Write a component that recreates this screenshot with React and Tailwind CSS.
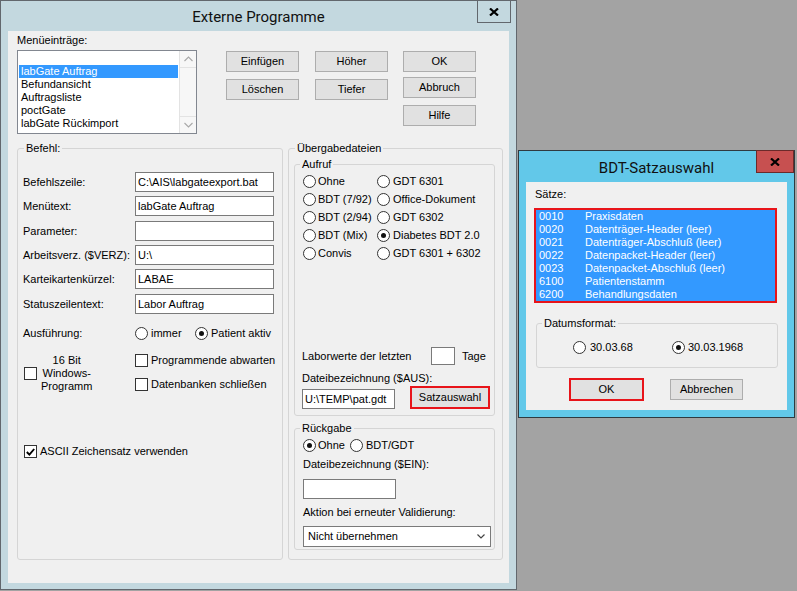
import React from 'react';

const Radio = ({ checked }) => (
  <span className="flex h-[13px] w-[13px] shrink-0 items-center justify-center rounded-full border border-[#333333] bg-white">
    {checked ? <span className="h-[5px] w-[5px] rounded-full bg-[#111111]" /> : null}
  </span>
);

const Check = ({ checked }) => (
  <span className="flex h-[13px] w-[13px] shrink-0 items-center justify-center border border-[#333333] bg-white">
    {checked ? (
      <svg width="9" height="8" viewBox="0 0 9 8">
        <path d="M0.8 4 L3.4 6.6 L8.2 1" fill="none" stroke="#000" strokeWidth="1.9" />
      </svg>
    ) : null}
  </span>
);

const Btn = ({ children, className }) => (
  <div className={`flex items-center justify-center border border-[#adadad] bg-[#e1e1e1] ${className}`}>{children}</div>
);

const CloseX = () => (
  <svg width="10" height="8" viewBox="0 0 10 8">
    <path d="M1 0.5 L9 7.5 M9 0.5 L1 7.5" stroke="#000" strokeWidth="2.2" />
  </svg>
);

const Input = ({ value, className }) => (
  <div className={`flex items-center border border-[#7a7a7a] bg-white pl-[2px] ${className}`}>{value}</div>
);

const Chevron = ({ up, color }) => (
  <svg width="9" height="6" viewBox="0 0 9 6">
    <path d={up ? 'M0.5 5 L4.5 1 L8.5 5' : 'M0.5 1 L4.5 5 L8.5 1'} fill="none" stroke={color} strokeWidth="1.1" />
  </svg>
);

const befehlRows = [
  ['Befehlszeile:', 'C:\\AIS\\labgateexport.bat', ''],
  ['Menütext:', 'labGate Auftrag', 'mt-[4px]'],
  ['Parameter:', '', 'mt-[5px]'],
  ['Arbeitsverz. ($VERZ):', 'U:\\', 'mt-[4px]'],
  ['Karteikartenkürzel:', 'LABAE', 'mt-[4px]'],
  ['Statuszeilentext:', 'Labor Auftrag', 'mt-[5px]'],
];

const aufrufRows = [
  ['Ohne', false, 'GDT 6301', false],
  ['BDT (7/92)', false, 'Office-Dokument', false],
  ['BDT (2/94)', false, 'GDT 6302', false],
  ['BDT (Mix)', false, 'Diabetes BDT 2.0', true],
  ['Convis', false, 'GDT 6301 + 6302', false],
];

const saetze = [
  ['0010', 'Praxisdaten'],
  ['0020', 'Datenträger-Header (leer)'],
  ['0021', 'Datenträger-Abschluß (leer)'],
  ['0022', 'Datenpacket-Header (leer)'],
  ['0023', 'Datenpacket-Abschluß (leer)'],
  ['6100', 'Patientenstamm'],
  ['6200', 'Behandlungsdaten'],
];

export default function App() {
  return (
    <div className="relative h-[591px] w-[797px] overflow-hidden bg-[#a3a3a3] font-['Liberation_Sans',Arial,sans-serif] text-[11px] leading-[13px] text-black">
      {/* Main window */}
      <div className="absolute left-0 top-0 flex h-[590px] w-[517px] flex-col border border-[#62676d] bg-[#c3d8df]">
        <div className="relative flex h-[30px] shrink-0 items-center justify-center">
          <span className="mt-[1px] font-['Roboto',sans-serif] text-[15px] leading-[18px] text-[#111]">Externe Programme</span>
          <div className="absolute right-[5px] top-[-1px] flex h-[23px] w-[34px] items-center justify-center border border-[#62676d]">
            <CloseX />
          </div>
        </div>
        <div className="mx-[7px] mb-[6px] flex-1 bg-[#f0f0f0]">
          {/* top section */}
          <div className="flex pl-[9px] pt-[3px]">
            <div className="w-[180px]">
              <div className="h-[13px]">Menüeinträge:</div>
              <div className="mt-[3px] flex h-[84px] w-[180px] border border-[#828790] bg-white">
                <div className="flex-1 p-[1px]">
                  <div className="h-[13px]" />
                  <div className="h-[13px] bg-[#3399ff] pl-[2px] text-white">labGate Auftrag</div>
                  <div className="h-[13px] pl-[2px]">Befundansicht</div>
                  <div className="h-[13px] pl-[2px]">Auftragsliste</div>
                  <div className="h-[13px] pl-[2px]">poctGate</div>
                  <div className="h-[13px] pl-[2px]">labGate Rückimport</div>
                </div>
                <div className="flex w-[17px] flex-col justify-between border-l border-[#e3e3e3] bg-[#f7f7f7]">
                  <div className="flex h-[17px] items-center justify-center border-b border-[#e3e3e3]">
                    <Chevron up color="#a8a8a8" />
                  </div>
                  <div className="flex h-[17px] items-center justify-center border-t border-[#e3e3e3]">
                    <Chevron color="#a8a8a8" />
                  </div>
                </div>
              </div>
            </div>
            <div className="ml-[29px] mt-[17px] flex">
              <div className="flex flex-col gap-[7px]">
                <Btn className="h-[21px] w-[73px]">Einfügen</Btn>
                <Btn className="h-[21px] w-[73px]">Löschen</Btn>
              </div>
              <div className="ml-[16px] flex flex-col gap-[7px]">
                <Btn className="h-[21px] w-[73px]">Höher</Btn>
                <Btn className="h-[21px] w-[73px]">Tiefer</Btn>
              </div>
              <div className="ml-[15px] flex flex-col">
                <Btn className="h-[21px] w-[73px]">OK</Btn>
                <Btn className="mt-[5px] h-[21px] w-[73px]">Abbruch</Btn>
                <Btn className="mt-[7px] h-[21px] w-[73px]">Hilfe</Btn>
              </div>
            </div>
          </div>

          {/* bottom section */}
          <div className="mt-[8px] flex pl-[9px]">
            <fieldset className="h-[418px] w-[266px] rounded-[3px] border border-[#d5d5d5]">
              <legend className="ml-[6px] px-[2px] leading-[13px]">Befehl:</legend>
              <div className="pl-[5px] pt-[17px]">
                {befehlRows.map(([label, value, mt]) => (
                  <div key={label} className={`flex h-[20px] items-center ${mt}`}>
                    <span className="w-[112px] shrink-0">{label}</span>
                    <Input value={value} className="h-[20px] w-[139px]" />
                  </div>
                ))}
                <div className="mt-[13px] flex h-[13px] items-center">
                  <span className="w-[112px] shrink-0">Ausführung:</span>
                  <div className="flex w-[60px] items-center gap-[3px]">
                    <Radio />
                    <span>immer</span>
                  </div>
                  <div className="flex items-center gap-[3px]">
                    <Radio checked />
                    <span>Patient aktiv</span>
                  </div>
                </div>
                <div className="mt-[14px] flex items-start">
                  <div className="flex w-[112px] shrink-0 items-center pl-[1px]">
                    <Check />
                    <span className="ml-[4px] text-center">
                      16 Bit
                      <br />
                      Windows-
                      <br />
                      Programm
                    </span>
                  </div>
                  <div className="flex flex-col gap-[11px]">
                    <div className="flex h-[13px] items-center gap-[3px]">
                      <Check />
                      <span>Programmende abwarten</span>
                    </div>
                    <div className="flex h-[13px] items-center gap-[3px]">
                      <Check />
                      <span>Datenbanken schließen</span>
                    </div>
                  </div>
                </div>
                <div className="mt-[52px] flex h-[13px] items-center gap-[3px] pl-[1px]">
                  <Check checked />
                  <span>ASCII Zeichensatz verwenden</span>
                </div>
              </div>
            </fieldset>

            <fieldset className="ml-[5px] h-[418px] w-[215px] rounded-[3px] border border-[#d5d5d5]">
              <legend className="ml-[6px] px-[2px] leading-[13px]">Übergabedateien</legend>
              <fieldset className="ml-[5px] mt-[3px] w-[201px] rounded-[3px] border border-[#d5d5d5] pb-[6px]">
                <legend className="ml-[5px] px-[2px] leading-[13px]">Aufruf</legend>
                <div className="pl-[8px] pt-[1px]">
                  {aufrufRows.map(([a, ac, b, bc]) => (
                    <div key={a} className="flex h-[18px] items-center">
                      <div className="flex w-[74px] items-center gap-[2px]">
                        <Radio checked={ac} />
                        <span>{a}</span>
                      </div>
                      <div className="flex items-center gap-[3px]">
                        <Radio checked={bc} />
                        <span>{b}</span>
                      </div>
                    </div>
                  ))}
                </div>
                <div className="mt-[85px] flex h-[18px] items-center pl-[7px]">
                  <span className="w-[129px] shrink-0">Laborwerte der letzten</span>
                  <div className="h-[18px] w-[24px] border border-[#7a7a7a] bg-white" />
                  <span className="ml-[7px]">Tage</span>
                </div>
                <div className="mt-[7px] h-[13px] pl-[7px]">Dateibezeichnung ($AUS):</div>
                <div className="mt-[1px] flex items-end pl-[7px]">
                  <Input value="U:\TEMP\pat.gdt" className="h-[20px] w-[93px]" />
                  <div className="ml-[15px] flex h-[23px] w-[80px] items-center justify-center border-2 border-[#e8141a] bg-[#e1e1e1]">
                    Satzauswahl
                  </div>
                </div>
              </fieldset>
              <fieldset className="ml-[5px] mt-[6px] w-[201px] rounded-[3px] border border-[#d5d5d5] pb-[2px]">
                <legend className="ml-[5px] px-[2px] leading-[13px]">Rückgabe</legend>
                <div className="flex h-[18px] items-center pl-[8px] pt-[2px]">
                  <div className="flex w-[47px] items-center gap-[2px]">
                    <Radio checked />
                    <span>Ohne</span>
                  </div>
                  <div className="flex items-center gap-[3px]">
                    <Radio />
                    <span>BDT/GDT</span>
                  </div>
                </div>
                <div className="mt-[5px] h-[13px] pl-[8px]">Dateibezeichnung ($EIN):</div>
                <div className="mt-[8px] pl-[8px]">
                  <Input value="" className="h-[20px] w-[93px]" />
                </div>
                <div className="mt-[7px] h-[13px] pl-[8px]">Aktion bei erneuter Validierung:</div>
                <div className="mt-[7px] pl-[8px]">
                  <div className="flex h-[21px] w-[188px] items-center justify-between border border-[#7a7a7a] bg-white pl-[4px] pr-[5px]">
                    <span>Nicht übernehmen</span>
                    <svg width="8" height="5" viewBox="0 0 8 5">
                      <path d="M0.5 0.5 L4 4 L7.5 0.5" fill="none" stroke="#444" strokeWidth="1.2" />
                    </svg>
                  </div>
                </div>
              </fieldset>
            </fieldset>
          </div>
        </div>
      </div>

      {/* BDT window */}
      <div className="absolute left-[518px] top-[150px] flex h-[268px] w-[277px] flex-col border border-[#2f3a40] bg-[#62c8e9]">
        <div className="relative flex h-[31px] shrink-0 items-center justify-center">
          <span className="mt-[2px] font-['Roboto',sans-serif] text-[15px] leading-[18px] text-[#111]">BDT-Satzauswahl</span>
          <div className="absolute right-0 top-[-1px] flex h-[23px] w-[38px] items-center justify-center border border-[#6b2a2a] bg-[#c75050]">
            <CloseX />
          </div>
        </div>
        <div className="mx-[7px] mb-[7px] flex-1 bg-[#f0f0f0]">
          <div className="h-[13px] pl-[9px] mt-[6px]">Sätze:</div>
          <div className="ml-[8px] mt-[7px] h-[95px] w-[243px] border-2 border-[#e8141a] bg-[#3399ff] pl-[3px] text-white">
            {saetze.map(([c, n]) => (
              <div key={c} className="flex h-[13px]">
                <span className="w-[46px]">{c}</span>
                <span>{n}</span>
              </div>
            ))}
          </div>
          <fieldset className="ml-[10px] mt-[14px] h-[51px] w-[242px] rounded-[3px] border border-[#d5d5d5]">
            <legend className="ml-[5px] px-[2px] leading-[13px]">Datumsformat:</legend>
            <div className="flex h-[13px] items-center pl-[36px] pt-[0px] mt-[11px]">
              <div className="flex w-[99px] items-center gap-[4px]">
                <Radio />
                <span>30.03.68</span>
              </div>
              <div className="flex items-center gap-[3px]">
                <Radio checked />
                <span>30.03.1968</span>
              </div>
            </div>
          </fieldset>
          <div className="ml-[43px] mt-[10px] flex items-center">
            <div className="flex h-[23px] w-[75px] items-center justify-center border-2 border-[#e8141a] bg-[#e1e1e1]">OK</div>
            <Btn className="ml-[26px] h-[21px] w-[73px]">Abbrechen</Btn>
          </div>
        </div>
      </div>
    </div>
  );
}
